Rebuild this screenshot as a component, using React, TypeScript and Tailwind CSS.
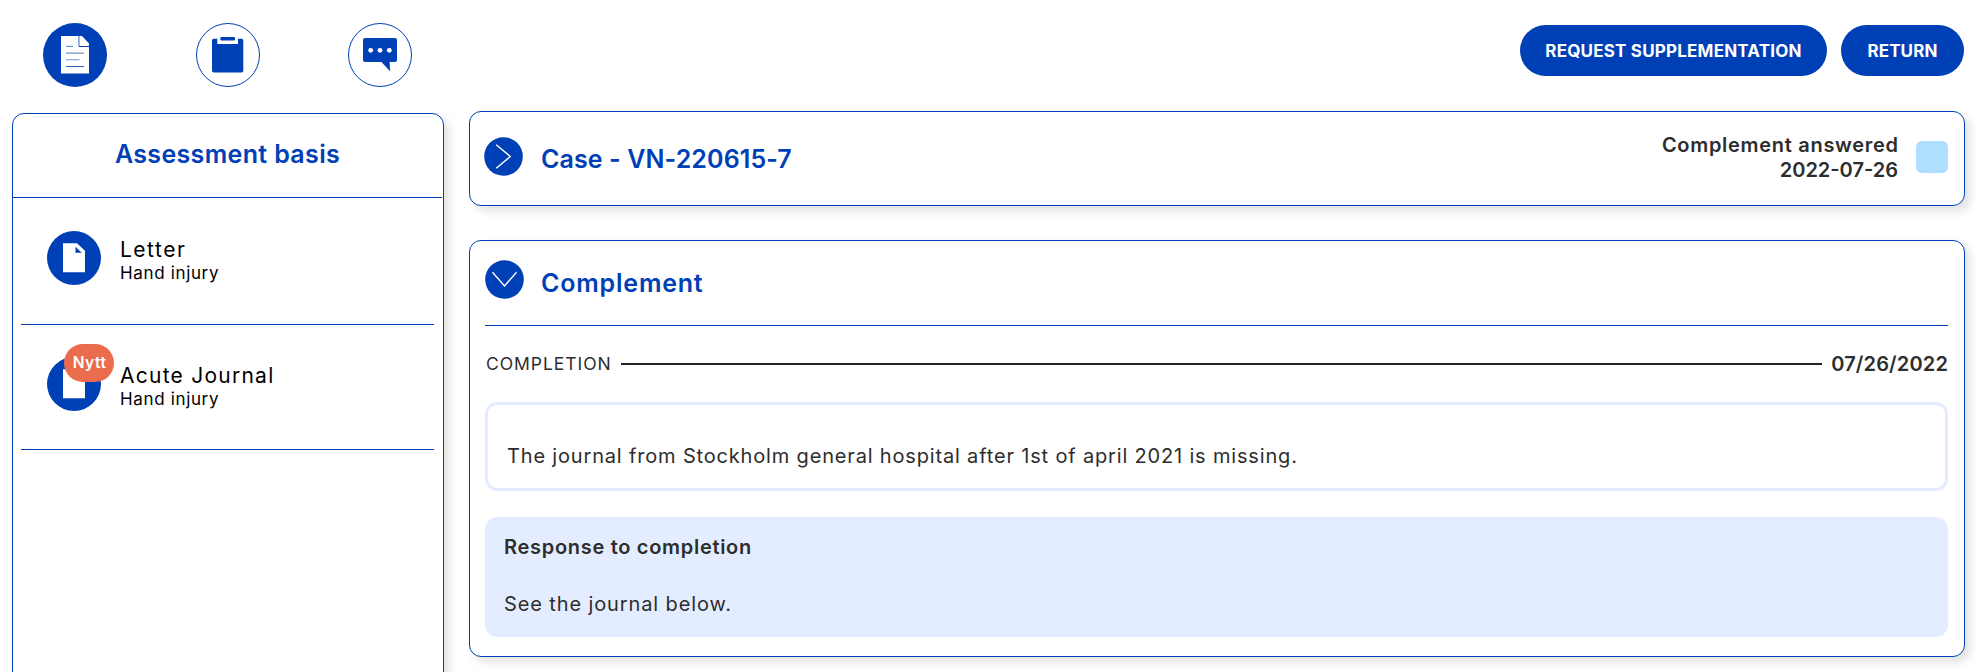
import type { ReactNode } from "react";

type Document = {
  id: string;
  title: string;
  subtitle: string;
  isNew?: boolean;
};

const DOCUMENTS: Document[] = [
  { id: "d1", title: "Letter", subtitle: "Hand injury" },
  { id: "d2", title: "Acute Journal", subtitle: "Hand injury", isNew: true },
];

function LettersIcon() {
  return (
    <svg className="block h-16 w-16" viewBox="0 0 64 64" fill="none">
      <circle cx="32" cy="32" r="32" fill="#0040b6" />
      <path d="M18 13h21l7 7.5v30H18z" fill="#fff" />
      <path d="M35.9 13v10.4" stroke="#7f9fda" strokeWidth="1.6" />
      <path d="M36 23.5h10" stroke="#0040b6" strokeWidth="1" />
      <path d="M23 23.4h7M23 30.1h18M23 36.7h13.5" stroke="#7393d4" strokeWidth="1.1" />
      <path d="M23 43.5h18" stroke="#2a60c3" strokeWidth="1" />
    </svg>
  );
}

function ClipboardIcon() {
  return (
    <svg className="block h-16 w-16" viewBox="0 0 64 64" fill="none">
      <circle cx="32" cy="32" r="31.5" stroke="#0040b6" />
      <rect x="16" y="15.8" width="31.3" height="33.7" rx="1.8" fill="#0040b6" />
      <path d="M21.3 15h20.7v6H21.3z" fill="#fff" />
      <rect x="24.3" y="14" width="14.7" height="3.4" rx="1" fill="#0040b6" />
    </svg>
  );
}

function ChatIcon() {
  return (
    <svg className="block h-16 w-16" viewBox="0 0 64 64" fill="none">
      <circle cx="32" cy="32" r="31.5" stroke="#0040b6" />
      <rect x="15" y="15" width="34" height="24" rx="2" fill="#0040b6" />
      <path d="M33 38.5h8.6l.5 9.7z" fill="#0040b6" />
      <circle cx="22.7" cy="27.3" r="2.4" fill="#fff" />
      <circle cx="32" cy="27.3" r="2.4" fill="#fff" />
      <circle cx="41.3" cy="27.3" r="2.4" fill="#fff" />
    </svg>
  );
}

function DocumentIcon() {
  return (
    <svg className="block h-[54px] w-[54px]" viewBox="0 0 54 54">
      <circle cx="27" cy="27" r="27" fill="#0040b6" />
      <path d="M16 12.3h14l8 7.4v21.6H16z" fill="#fff" />
      <path d="M28.5 15.7v6h6.2z" fill="#0040b6" />
    </svg>
  );
}

function Chevron({ open }: { open?: boolean }) {
  return (
    <svg className="block h-[39px] w-[39px]" viewBox="0 0 39 39" fill="none">
      <circle cx="19.5" cy="19.5" r="19.3" fill="#0040b6" />
      <path d={open ? "M7.5 12.2 19.5 26 31.5 12.2" : "M12.2 7.8 26.3 19.5 12.2 31.2"} stroke="#fff" strokeWidth="1.4" />
    </svg>
  );
}

function Card({ children, className }: { children: ReactNode; className: string }) {
  return (
    <section className={`rounded-xl border border-[#0040b6] bg-white shadow-[5px_5px_10px_rgba(0,0,0,0.12)] ${className}`}>
      {children}
    </section>
  );
}

function DocumentRow({ doc }: { doc: Document }) {
  return (
    <li className="flex h-[125px] items-start border-b border-[#0040b6] pl-[26px] pt-[31px] last:pt-[32px]">
      <div className="relative">
        <DocumentIcon />
        {doc.isNew && (
          <span className="absolute -top-[13px] left-[17px] flex h-[38px] w-[50px] items-center justify-center rounded-[19px] bg-[#eb6c4c] pl-px text-[15.5px] font-semibold tracking-[0.5px] text-white">
            Nytt
          </span>
        )}
      </div>
      <div className="ml-[19px] mt-[6px] text-black">
        <p className={doc.isNew ? "text-[21px] leading-[26px] tracking-[1.25px]" : "text-[21px] leading-[26px] tracking-[1.5px]"}>{doc.title}</p>
        <p className="text-[17px] leading-5 tracking-[0.65px]">{doc.subtitle}</p>
      </div>
    </li>
  );
}

export default function App() {
  return (
    <div className="h-[672px] w-[1987px] overflow-hidden bg-white font-['Inter',sans-serif] text-[#2d2d2d]">
      <header className="flex h-[111px] items-start justify-between pl-[43px] pr-[23px] pt-[23px]">
        <nav className="flex">
          <button><LettersIcon /></button>
          <button className="ml-[89px]"><ClipboardIcon /></button>
          <button className="ml-[88px]"><ChatIcon /></button>
        </nav>
        <div className="mt-[2px] flex gap-[14px] text-[17px] font-bold text-white">
          <button className="h-[51px] w-[307px] rounded-full bg-[#0040b6] pt-[3px] tracking-[0.2px]">REQUEST SUPPLEMENTATION</button>
          <button className="h-[51px] w-[123px] rounded-full bg-[#0040b6] pt-[3px] tracking-[0.1px]">RETURN</button>
        </div>
      </header>

      <div className="flex items-start pl-3">
        <Card className="mt-[2px] h-[640px] w-[432px]">
          <h2 className="mr-px h-[84px] border-b border-[#0040b6] pt-[23px] text-center text-[25px] font-semibold leading-[34px] tracking-[0.35px] text-[#0040b6]">
            Assessment basis
          </h2>
          <ul className="ml-2 mr-[9px] pt-[2px]">
            {DOCUMENTS.map((doc) => (
              <DocumentRow key={doc.id} doc={doc} />
            ))}
          </ul>
        </Card>

        <main className="ml-[25px] w-[1496px]">
          <Card className="flex h-[95px] items-start pl-[14px] pr-4">
            <div className="mt-[25px]"><Chevron /></div>
            <h2 className="ml-[18px] mt-[30px] text-[25px] font-semibold leading-[34px] tracking-[0.1px] text-[#0040b6]">Case - VN-220615-7</h2>
            <div className="ml-auto mt-[21px] text-right text-[20px] font-semibold leading-[25px]">
              <p className="-mr-[0.7px] tracking-[0.7px]">Complement answered</p>
              <p>2022-07-26</p>
            </div>
            <div className="ml-[18px] mt-[29px] h-8 w-8 rounded-md bg-[#b0deff]" />
          </Card>

          <Card className="mt-[34px] h-[417px] px-[15px]">
            <div className="mr-px flex h-[85px] items-start border-b border-[#0040b6]">
              <div className="mt-[19px]"><Chevron open /></div>
              <h2 className="ml-[17px] mt-[25px] text-[25px] font-semibold leading-[34px] tracking-[0.8px] text-[#0040b6]">Complement</h2>
            </div>

            <div className="mr-px mt-[25px] flex h-[26px] items-center">
              <span className="w-[136px] pl-px text-[17.5px] tracking-[0.95px]">COMPLETION</span>
              <div className="h-[2px] flex-1 bg-[#222]" />
              <span className="ml-[9px] w-[117px] text-right text-[20px] font-semibold tracking-[0.15px]">07/26/2022</span>
            </div>

            <div className="mr-px mt-[25px] h-[89px] rounded-xl border-[3px] border-[#e4edff] pl-[19px] pt-[38px]">
              <p className="text-[20px] leading-[26px] tracking-[0.83px]">
                The journal from Stockholm general hospital after 1st of april 2021 is missing.
              </p>
            </div>

            <div className="mr-px mt-[26px] h-[120px] rounded-xl bg-[#e4edff] pl-[19px] pt-[17px]">
              <h3 className="text-[20px] font-semibold leading-[26px] tracking-[0.7px]">Response to completion</h3>
              <p className="mt-[31px] text-[20px] leading-[26px] tracking-[0.88px]">See the journal below.</p>
            </div>
          </Card>
        </main>
      </div>
    </div>
  );
}
